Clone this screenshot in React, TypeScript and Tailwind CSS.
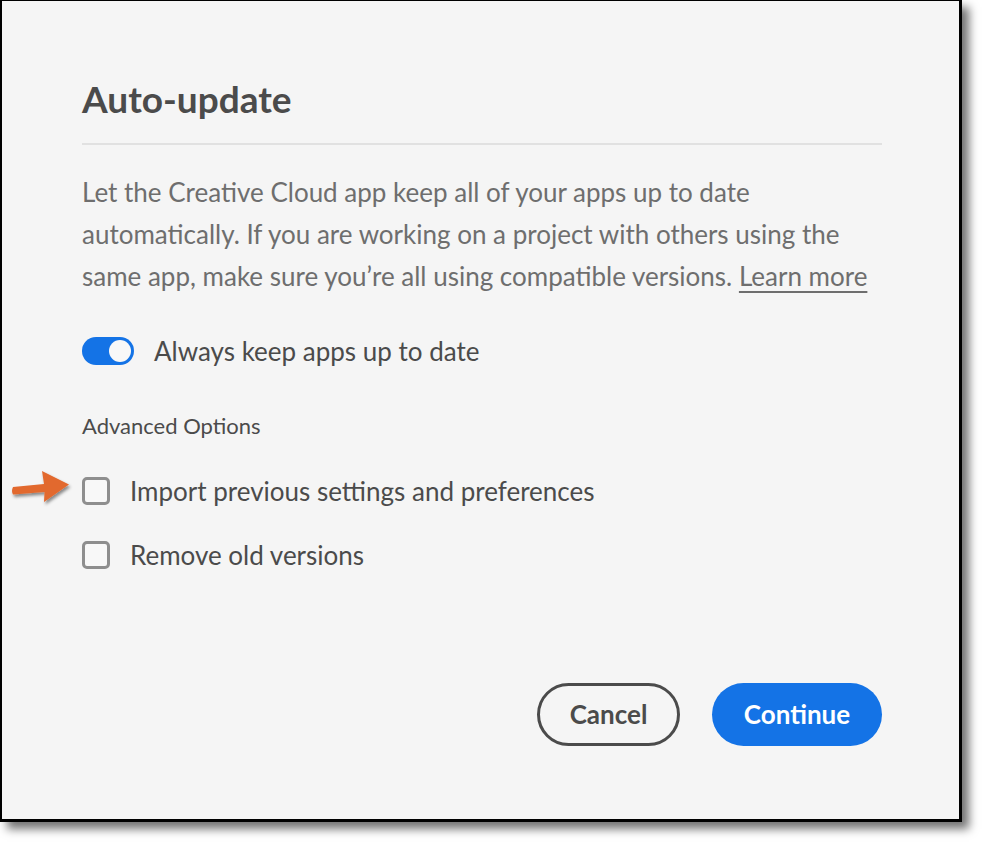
import React from "react";

export default function App() {
  const font = { fontFamily: "Lato, 'Open Sans', sans-serif" };
  return (
    <div className="w-[982px] h-[842px] bg-white" style={font}>
      <div className="w-[962px] h-[822px] bg-[#f5f5f5] border-t border-l-2 border-r-[3px] border-b-[3px] border-black shadow-[7px_7px_9px_rgba(0,0,0,0.55)] pl-[80px] pr-[77px] pt-[76px] flex flex-col">
        <h1 className="text-[37px] leading-[44px] font-bold text-[#4b4b4b]">Auto-update</h1>
        <div className="mt-[22px] h-[2px] bg-[#e1e1e1]" />
        <p className="mt-[26px] text-[26px] leading-[42px] text-[#6e6e6e]">
          Let the Creative Cloud app keep all of your apps up to date
          <br />
          automatically. If you are working on a project with others using the
          <br />
          same app, make sure you’re all using compatible versions.{" "}
          <span className="underline underline-offset-[5px] decoration-2">Learn more</span>
        </p>
        <div className="mt-[40px] h-[28px] flex items-center gap-[20px]">
          <div className="w-[52px] h-[28px] rounded-full bg-[#1473e6] relative shrink-0">
            <div className="absolute right-[3px] top-[3px] w-[22px] h-[22px] rounded-full bg-[#f8f8f8]" />
          </div>
          <span className="text-[26px] leading-[28px] text-[#4b4b4b]">Always keep apps up to date</span>
        </div>
        <div className="mt-[46px] h-[28px] flex items-center text-[22px] text-[#4b4b4b]">Advanced Options</div>
        <div className="mt-[38px] h-[28px] flex items-center gap-[20px] relative">
          <svg className="absolute left-[-74px] top-[-11px]" width="66" height="42" viewBox="0 0 66 42">
            <defs>
              <filter id="sh" x="-20%" y="-40%" width="150%" height="190%">
                <feDropShadow dx="1.5" dy="2.5" stdDeviation="1.8" floodColor="#000" floodOpacity="0.45" />
              </filter>
            </defs>
            <path d="M5 21 L36 18 L34 5 L61 18.5 L36 36 L36.5 26 L5 28.5 Q3 25 5 21 Z" fill="#e2692f" filter="url(#sh)" strokeLinejoin="round" />
          </svg>
          <div className="w-[28px] h-[28px] rounded-[5px] border-[3px] border-[#8e8e8e] bg-[#f8f8f8] shrink-0" />
          <span className="text-[26px] leading-[28px] text-[#4b4b4b]">Import previous settings and preferences</span>
        </div>
        <div className="mt-[36px] h-[28px] flex items-center gap-[20px]">
          <div className="w-[28px] h-[28px] rounded-[5px] border-[3px] border-[#8e8e8e] bg-[#f8f8f8] shrink-0" />
          <span className="text-[26px] leading-[28px] text-[#4b4b4b]">Remove old versions</span>
        </div>
        <div className="mt-auto mb-[73px] flex justify-end gap-[32px]">
          <button className="w-[143px] h-[63px] rounded-full border-[3px] border-[#4b4b4b] text-[26px] font-bold text-[#4b4b4b]">Cancel</button>
          <button className="w-[170px] h-[63px] rounded-full bg-[#1473e6] text-[26px] font-bold text-white">Continue</button>
        </div>
      </div>
    </div>
  );
}
